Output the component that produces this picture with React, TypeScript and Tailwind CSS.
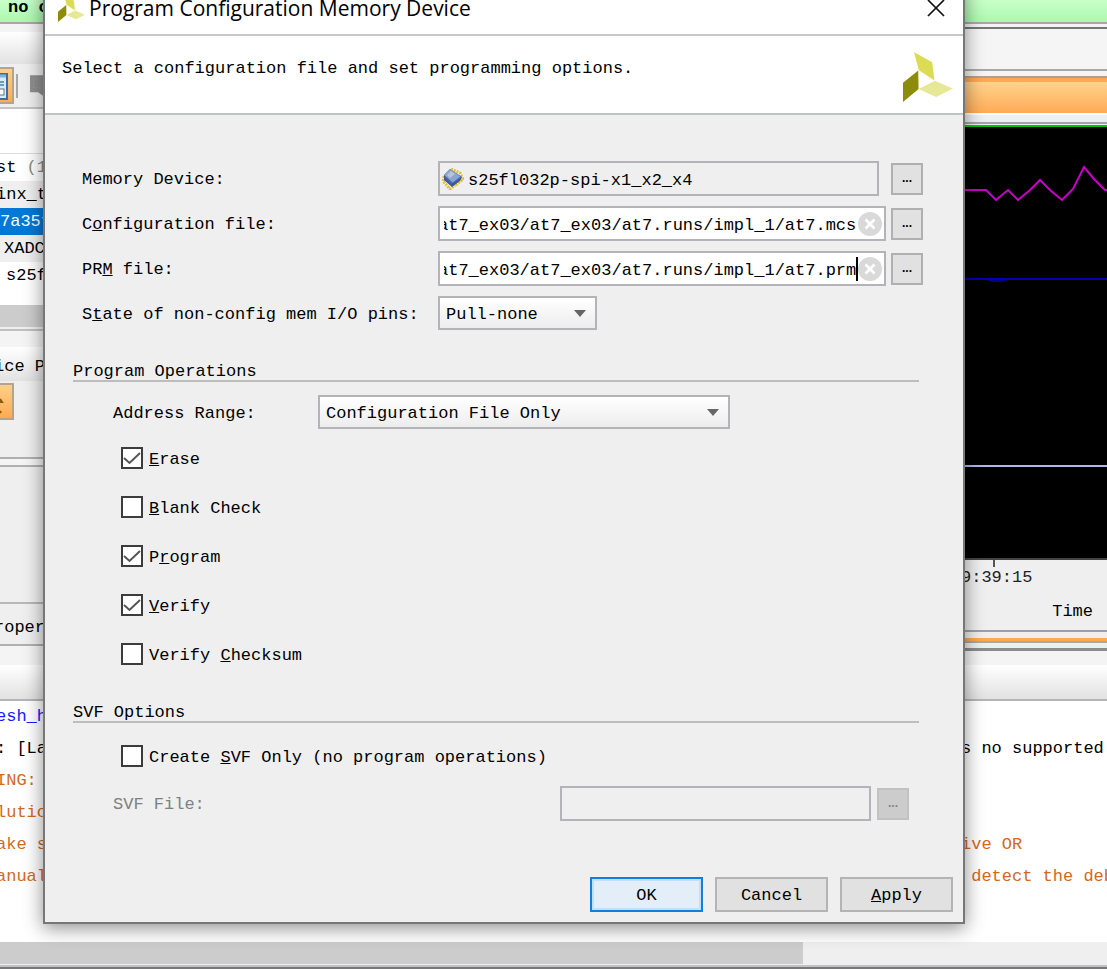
import { useState } from "react";
import type { ReactNode } from "react";

const MONO = "font-['Liberation_Mono','Noto_Sans_CJK_SC',monospace] text-[17px] leading-5";

const OPERATIONS = [
  { id: "erase", label: <><u>E</u>rase</>, checked: true },
  { id: "blank", label: <><u>B</u>lank Check</>, checked: false },
  { id: "program", label: <>P<u>r</u>ogram</>, checked: true },
  { id: "verify", label: <><u>V</u>erify</>, checked: true },
  { id: "checksum", label: <>Verify <u>C</u>hecksum</>, checked: false },
];

const CONSOLE_LINES = [
  { left: "esh_h", right: "", color: "text-[#1a1aff]" },
  { left: ": [La", right: "s no supported", color: "text-black" },
  { left: "ING:", right: "", color: "text-[#d2691e]" },
  { left: "lutio", right: "", color: "text-[#d2691e]" },
  { left: "ake s", right: "ive OR", color: "text-[#d2691e]" },
  { left: "anual", right: " detect the deb", color: "text-[#d2691e]" },
];

function Logo({ className }: { className: string }) {
  return (
    <svg viewBox="0 0 151 151" className={className} aria-hidden="true">
      <polygon points="33,0 88,31 95,86 48,55" fill="#dcdc54" />
      <polygon points="0,93 46,56 47,112 0,151" fill="#8c8c0a" />
      <polygon points="47,112 96,87 151,110 100,136" fill="#e6e896" />
    </svg>
  );
}

function ChipIcon() {
  return (
    <svg viewBox="0 0 22 22" className="size-[22px] shrink-0" aria-hidden="true">
      <path d="M2 8 L1 13 L8 21 L13 17 M9 1 L18 5 L21 11 L13 18" fill="none" stroke="#e0c42c" strokeWidth="3" strokeDasharray="2 1" />
      <path d="M2 7 L8 1 L20 9 L18 13 L10 19 L2 12 Z" fill="#3f5a8c" />
      <path d="M2 7 L8 1 L19 9 L11 15 Z" fill="#8aa4d4" />
      <path d="M5 7 L9 3 L13 6 L8 10 Z" fill="#b8c4d4" />
      <path d="M3 9 L10 16 M11 15 L19 9" fill="none" stroke="#4866b4" strokeWidth="1.5" />
    </svg>
  );
}

function BrowseButton({ label, disabled }: { label: string; disabled?: boolean }) {
  return (
    <button
      type="button"
      aria-label={label}
      disabled={disabled}
      className="size-8 shrink-0 border-2 border-[#b0b0b0] bg-[#e1e1e1] pb-0.5 font-['Liberation_Sans',sans-serif] text-xs font-bold leading-4 text-black disabled:border-[#c2c2c2] disabled:bg-[#cccccc] disabled:text-[#838383]"
    >
      ...
    </button>
  );
}

function FileInput({ id, initial, caret }: { id: string; initial: string; caret?: boolean }) {
  const [value, setValue] = useState(initial);

  // long paths show their tail, not their head
  const showEnd = (el: HTMLInputElement | null) => {
    if (el) el.scrollLeft = el.scrollWidth;
  };

  return (
    <div className="flex h-[35px] min-w-0 flex-1 items-center border-2 border-[#b3b3ba] bg-white pl-1 pr-0.5">
      <input
        id={id}
        ref={showEnd}
        value={value}
        onChange={(e) => setValue(e.target.value)}
        className="h-7 min-w-0 flex-1 bg-transparent pt-[3px] outline-none"
      />
      <span className={caret ? "h-6 w-0.5 bg-black" : "h-6 w-0.5"} />
      <button type="button" aria-label="Clear" onClick={() => setValue("")} className="size-6 shrink-0">
        <svg viewBox="0 0 24 24" className="size-6">
          <circle cx="12" cy="12" r="12" fill="#d9d9d9" />
          <path d="M7.5 7.5 L16.5 16.5 M16.5 7.5 L7.5 16.5" stroke="#fff" strokeWidth="2.8" />
        </svg>
      </button>
    </div>
  );
}

function Select({ id, value, className }: { id: string; value: string; className: string }) {
  return (
    <div className={`relative ${className}`}>
      <select
        id={id}
        defaultValue={value}
        className="h-[34px] w-full appearance-none border-2 border-[#b3b3b8] bg-linear-to-b from-white to-[#ededed] pl-[6px] pr-8 pt-[3px] outline-none"
      >
        <option>{value}</option>
      </select>
      <svg viewBox="0 0 12 7" className="pointer-events-none absolute right-[11px] top-[14px] h-[7px] w-3" aria-hidden="true">
        <path d="M0 0 H12 L6 7 Z" fill="#666" />
      </svg>
    </div>
  );
}

function CheckBox({ id, checked, children }: { id: string; checked: boolean; children: ReactNode }) {
  const [on, setOn] = useState(checked);

  return (
    <label htmlFor={id} className="flex h-[22px] items-center gap-[6px]">
      <span className="relative size-[22px]">
        <input
          id={id}
          type="checkbox"
          checked={on}
          onChange={(e) => setOn(e.target.checked)}
          className="block size-[22px] appearance-none border-2 border-[#3c3c3c] bg-white"
        />
        {on && (
          <svg viewBox="0 0 22 22" className="pointer-events-none absolute inset-0 size-[22px]" aria-hidden="true">
            <path d="M3 11 L8.5 16 L19 6" fill="none" stroke="#555" strokeWidth="2" />
          </svg>
        )}
      </span>
      <span className="pt-[3px]">{children}</span>
    </label>
  );
}

function LeftPanels() {
  return (
    <aside className="flex w-11 flex-col whitespace-pre">
      <div className="h-2 bg-[#f4f4f4]" />
      <div className="h-8 bg-linear-to-b from-white to-[#e2e2e2]" />
      <div className="flex h-[45px] items-center border-b-2 border-[#c4c4c4] bg-[#efefef]">
        <button type="button" aria-label="Dashboard" className="h-[37px] w-3.5 border-2 border-l-0 border-[#b4a48c] bg-linear-to-b from-[#ffcf88] to-[#ffab50]">
          <svg viewBox="0 0 12 32" className="h-8 w-3">
            <rect x="-14" y="4" width="21" height="25" fill="#d7ecfb" stroke="#3a6ea8" strokeWidth="2" />
            <path d="M-12 6 H6" stroke="#7db4e6" strokeWidth="3" />
            <path d="M0 12 H4 M0 15 H4" stroke="#4a7fb8" strokeWidth="1.5" />
            <rect x="-2" y="19" width="6" height="6" fill="#fff" stroke="#55758f" />
          </svg>
        </button>
        <span className="ml-0.5 h-6 w-0.5 bg-[#a8a8a8]" />
        <svg viewBox="0 0 16 26" className="ml-3 h-[26px] w-4" aria-hidden="true">
          <path d="M0 1 H16 V25 L9 20 H0 Z" fill="#8f8f8f" />
          <path d="M4 5 H14 M4 15 H14 M4 7 V15" fill="none" stroke="#a3a3a3" strokeDasharray="1 2" />
        </svg>
      </div>
      <div className="h-[45px] border-b border-[#ddd] bg-white" />
      <div className="-ml-1 h-[27px] bg-white pt-1">st <span className="text-[#888]">(1</span></div>
      <div className="-ml-1 h-[27px] bg-[#efefef] pt-1">inx_t</div>
      <div className="-ml-1 h-[27px] bg-[#0078d7] pl-1 pt-1 text-white">7a35t</div>
      <div className="h-[27px] bg-[#efefef] pl-1 pt-1">XADC</div>
      <div className="h-[43px] bg-white pl-1.5 pt-1">s25f</div>
      <div className="h-[22px] bg-[#cccccc]" />
      <div className="h-1 border-b-2 border-[#c0c0c0] bg-[#efefef]" />
      <div className="h-4 bg-[#f4f4f4]" />
      <div className="-ml-1.5 h-[34px] bg-linear-to-b from-white to-[#e2e2e2] pt-2.5">ice P</div>
      <div className="h-[78px] border-b-2 border-[#b0b0b0] bg-[#efefef] pt-0.5">
        <button type="button" aria-label="Back" className="block h-[37px] w-3.5 border-2 border-l-0 border-[#b4a48c] bg-linear-to-b from-[#ffcf88] to-[#ffab50]">
          <svg viewBox="0 0 12 32" className="h-8 w-3">
            <path d="M0 13 L2 16 H0 M0 25 L1 27" fill="none" stroke="#8a5a10" strokeWidth="2" />
          </svg>
        </button>
      </div>
      <div className="h-2 border-b-2 border-[#b0b0b0] bg-[#f4f4f4]" />
      <div className="h-[137px] border-b-2 border-[#b8b8b8] bg-[#efefef]" />
      <div className="-ml-1.5 h-[42px] border-b-2 border-[#b0b0b0] bg-[#efefef] pt-3.5">roper</div>
      <div className="flex-1 bg-[#f4f4f4]" />
    </aside>
  );
}

function WaveformPanel() {
  return (
    <section className="flex w-[146px] flex-col bg-[#efefef] whitespace-pre">
      <div className="h-[5px] border-b-2 border-[#777] bg-[#f4f4f4]" />
      <div className="h-[42px] border-b-2 border-[#a8a8a8] bg-[#f5f5f5]" />
      <div className="h-[7px] border-b-2 border-[#b0a090] bg-[#f4f4f4]" />
      <div className="h-[35px] border-t-4 border-[#ffa754] bg-linear-to-b from-[#ffd38c] to-[#ffaa54]" />
      <div className="h-[11px] border-b-2 border-t-2 border-b-[#a0a4ac] border-t-white bg-[#efefef]" />
      <svg className="mt-px h-[435px] w-full bg-black" aria-hidden="true">
        <path d="M0 1 H2000" stroke="#00c800" strokeWidth="2" />
        <path
          d="M0 65 H25 L35 75 L47 65 L57 75 L69 65 L79 55 L89 65 L101 75 L112 64 L123 42 L133 54 L144 65 H2000"
          fill="none"
          stroke="#c800c8"
          strokeWidth="2"
        />
        <path d="M0 154 H2000" stroke="#0000b4" strokeWidth="2" />
        <path d="M26 154 L32 156 H40 L46 154" fill="none" stroke="#0000b4" strokeWidth="1.5" />
        <path d="M0 341 H2000" stroke="#b4b4f0" strokeWidth="2" />
        <path d="M0 434 H2000" stroke="#444" strokeWidth="2" />
      </svg>
      <span className="ml-8 h-[7px] w-0.5 bg-[#555]" />
      <span className="pt-px text-[#222]">9:39:15</span>
      <span className="mt-3.5 self-end pr-3.5">Time</span>
      <div className="mt-2 h-0.5 bg-[#9ca0ac]" />
      <div className="mt-[6px] h-[5px] border-b-2 border-[#a8a8a8] bg-[#ffa94f]" />
      <div className="mt-[5px] h-[3px] bg-[#8c8c8c]" />
      <div className="flex-1 bg-[#f4f4f4]" />
    </section>
  );
}

function ProgramDialog() {
  return (
    <div
      role="dialog"
      aria-labelledby="dialog-title"
      className="absolute -top-5 left-[43px] right-[142px] border-2 border-[#777] bg-[#efefef] shadow-[0_4px_18px_rgba(0,0,0,0.45)]"
    >
      <header className="flex h-[54px] items-center border-b-2 border-[#c6c8c6] bg-white pl-[13px] pr-[18px]">
        <Logo className="size-[27px]" />
        <h1 id="dialog-title" className="ml-1 flex-1 whitespace-nowrap font-['Open_Sans','Noto_Sans',sans-serif] text-[21px] leading-7">
          Program Configuration Memory Device
        </h1>
        <button type="button" aria-label="Close">
          <svg viewBox="0 0 18 18" className="size-[18px]">
            <path d="M1 1 L17 17 M17 1 L1 17" stroke="#111" strokeWidth="1.7" />
          </svg>
        </button>
      </header>

      <div className="flex h-[79px] items-center justify-between border-b-2 border-[#c0c4c0] bg-white pl-[17px] pr-2.5 pt-1">
        <p className="pb-4">Select a configuration file and set programming options.</p>
        <Logo className="size-[50px]" />
      </div>

      <form className="pb-[10px] pt-[46px]" onSubmit={(e) => e.preventDefault()}>
        <div className="flex flex-col gap-2.5 pl-[37px] pr-10">
          <div className="flex items-center">
            <label htmlFor="memory" className="w-[356px] shrink-0 pt-[3px]">Memory Device:</label>
            <div className="mr-3 flex h-[35px] min-w-0 flex-1 items-center gap-1 border-2 border-[#b3b3ba] pl-0.5">
              <ChipIcon />
              <input id="memory" readOnly value="s25fl032p-spi-x1_x2_x4" className="h-7 min-w-0 flex-1 bg-transparent pt-[3px] outline-none" />
            </div>
            <BrowseButton label="Choose memory device" />
          </div>
          <div className="flex items-center">
            <label htmlFor="config" className="w-[356px] shrink-0 pt-[3px]">C<u>o</u>nfiguration file:</label>
            <FileInput id="config" initial="at7_ex03/at7_ex03/at7.runs/impl_1/at7.mcs" />
            <span className="w-[5px]" />
            <BrowseButton label="Choose configuration file" />
          </div>
          <div className="flex items-center">
            <label htmlFor="prm" className="w-[356px] shrink-0 pt-[3px]">PR<u>M</u> file:</label>
            <FileInput id="prm" initial="at7_ex03/at7_ex03/at7.runs/impl_1/at7.prm" caret />
            <span className="w-[5px]" />
            <BrowseButton label="Choose PRM file" />
          </div>
          <div className="flex items-center">
            <label htmlFor="pins" className="w-[356px] shrink-0 pt-[3px]">S<u>t</u>ate of non-config mem I/O pins:</label>
            <Select id="pins" value="Pull-none" className="w-[159px]" />
          </div>
        </div>

        <section className="ml-7 mr-11 mt-[30px]">
          <h2 className="border-b-2 border-[#bdbdbd] pt-1 leading-4">Program Operations</h2>
          <div className="mt-[13px] flex items-center pl-10">
            <label htmlFor="range" className="w-[205px] shrink-0 pt-[3px]">Address Ran<u>g</u>e:</label>
            <Select id="range" value="Configuration File Only" className="w-[412px]" />
          </div>
          <div className="mt-[18px] flex flex-col gap-[27px] pl-12">
            {OPERATIONS.map((op) => (
              <CheckBox key={op.id} id={op.id} checked={op.checked}>
                {op.label}
              </CheckBox>
            ))}
          </div>
        </section>

        <section className="ml-7 mr-11 mt-9">
          <h2 className="border-b-2 border-[#bdbdbd] pt-1 leading-4">SVF Options</h2>
          <div className="mt-[22px] pl-12">
            <CheckBox id="svf" checked={false}>
              Create <u>S</u>VF Only (no program operations)
            </CheckBox>
          </div>
          <div className="mt-[19px] flex items-center pl-10 pr-2.5">
            <label htmlFor="svf-file" className="flex-1 pt-[3px] text-[#808080]">SVF File:</label>
            <input id="svf-file" disabled className="mr-[6px] h-[35px] w-[311px] border-2 border-[#b3b3ba] bg-transparent" />
            <BrowseButton label="Choose SVF file" disabled />
          </div>
        </section>

        <footer className="mt-14 flex justify-end gap-3 pr-2.5">
          <button type="submit" className="h-[35px] w-[113px] border-2 border-[#1180dd] bg-[#e3eef8] pt-[3px] outline-2 -outline-offset-4 outline-[#c4e0f6]">OK</button>
          <button type="button" className="h-[35px] w-[113px] border-2 border-[#b4b4b4] bg-[#e1e1e1] pt-[3px]">Cancel</button>
          <button type="button" className="h-[35px] w-[113px] border-2 border-[#b4b4b4] bg-[#e1e1e1] pt-[3px]"><u>A</u>pply</button>
        </footer>
      </form>
    </div>
  );
}

export default function App() {
  return (
    <div className={`relative flex min-h-screen flex-col overflow-hidden bg-white text-black ${MONO}`}>
      <div className="h-6 border-b-2 border-[#a8a8a8] bg-linear-to-b from-[#c8ffc8] to-[#acf8b0] pl-2 font-bold leading-4">no c</div>

      <main className="flex h-[641px] justify-between bg-[#efefef]">
        <LeftPanels />
        <WaveformPanel />
      </main>

      <div className="h-9 border-b-2 border-[#b4b4ba] bg-linear-to-b from-white to-[#e2e2e2]" />

      <div className="flex-1 bg-white">
        {CONSOLE_LINES.map((line) => (
          <div key={line.left} className={`-ml-1 flex h-8 items-center justify-between whitespace-pre ${line.color}`}>
            <span className="w-11">{line.left}</span>
            <span className="w-[146px]">{line.right}</span>
          </div>
        ))}
      </div>

      <div className="h-[23px] bg-[#efefef]">
        <div className="h-[22px] w-[803px] bg-[#cccccc]" />
      </div>
      <div className="h-1 border-b-2 border-t-2 border-b-[#777] border-t-[#c0c0c8]" />

      <ProgramDialog />
    </div>
  );
}
